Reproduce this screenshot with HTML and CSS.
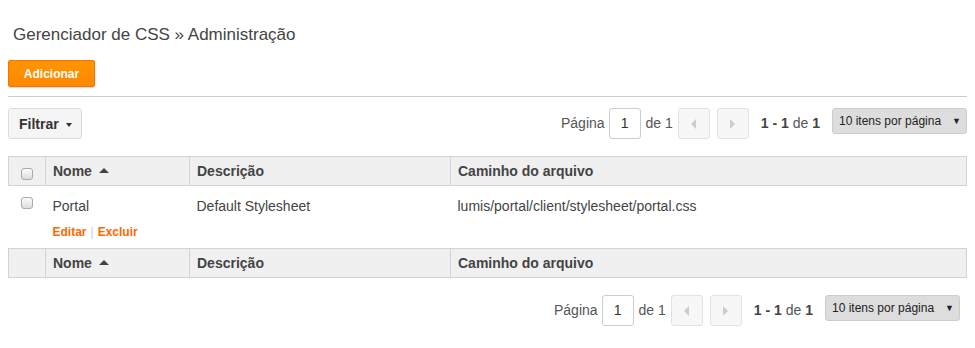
FILE: index.html
```html
<!DOCTYPE html>
<html lang="pt-BR">
<head>
  <meta charset="UTF-8" />
  <title>Gerenciador de CSS - Administração</title>
  <link rel="stylesheet" href="styles.css">
</head>
<body>

  <h1 class="title">Gerenciador de CSS &raquo; Administração</h1>

  <div class="toolbar">
    <button class="btn-add">Adicionar</button>
  </div>

  <!-- Filtro e paginação -->
  <div class="list-top">
    <button class="btn-filter">Filtrar <span class="caret"></span></button>
    <div class="pager">
      <span class="pager-label">Página</span>
      <span class="pager-input">1</span>
      <span class="pager-label">de 1</span>
      <span class="pager-btn"><span class="arrow-left"></span></span>
      <span class="pager-btn next"><span class="arrow-right"></span></span>
      <span class="pager-count"><b>1 - 1</b> de <b>1</b></span>
      <span class="pager-select">10 itens por página <span class="sel-arrow">&#9660;</span></span>
    </div>
  </div>

  <table class="grid">
    <thead>
      <tr>
        <th class="col-check"><span class="checkbox"></span></th>
        <th class="col-name">Nome <span class="sort-up"></span></th>
        <th class="col-desc">Descrição</th>
        <th>Caminho do arquivo</th>
      </tr>
    </thead>
    <tbody>
      <tr>
        <td class="col-check"><span class="checkbox"></span></td>
        <td>
          Portal
          <div class="actions"><a href="#">Editar</a><span class="sep">|</span><a href="#">Excluir</a></div>
        </td>
        <td>Default Stylesheet</td>
        <td>lumis/portal/client/stylesheet/portal.css</td>
      </tr>
    </tbody>
    <tfoot>
      <tr>
        <th class="col-check"></th>
        <th class="col-name">Nome <span class="sort-up"></span></th>
        <th class="col-desc">Descrição</th>
        <th>Caminho do arquivo</th>
      </tr>
    </tfoot>
  </table>

  <div class="list-bottom">
    <div class="pager">
      <span class="pager-label">Página</span>
      <span class="pager-input">1</span>
      <span class="pager-label">de 1</span>
      <span class="pager-btn"><span class="arrow-left"></span></span>
      <span class="pager-btn next"><span class="arrow-right"></span></span>
      <span class="pager-count"><b>1 - 1</b> de <b>1</b></span>
      <span class="pager-select">10 itens por página <span class="sel-arrow">&#9660;</span></span>
    </div>
  </div>

</body>
</html>
```

FILE: styles.css
```css
* { box-sizing: border-box; }
body {
  margin: 8px;
  font-family: 'Liberation Sans', Arial, sans-serif;
  color: #444;
  background: #fff;
}

.title {
  margin: 17px 0 0;
  padding-left: 5px;
  font-size: 17px;
  line-height: 20px;
  font-weight: normal;
  color: #444;
}

.toolbar {
  margin-top: 15px;
  padding-bottom: 9px;
  border-bottom: 1px solid #ccc;
}

.btn-add {
  display: block;
  height: 27px;
  width: 87px;
  padding: 0;
  border: 1px solid #ff7000;
  border-radius: 2px;
  background: linear-gradient(#ff9500, #ff8800);
  color: #fff;
  font-family: inherit;
  font-size: 12px;
  font-weight: bold;
  box-shadow: 0 1px 1px rgba(0,0,0,0.15);
}

.list-top {
  display: flex;
  justify-content: space-between;
  align-items: flex-start;
  margin-top: 11px;
}

.btn-filter {
  height: 31px;
  width: 74px;
  padding: 0 0 0 10px;
  text-align: left;
  border: 1px solid #ddd;
  border-radius: 3px;
  background: #f5f5f5;
  color: #333;
  font-family: inherit;
  font-size: 14px;
  font-weight: bold;
}

.caret {
  display: inline-block;
  margin-left: 3px;
  vertical-align: 2px;
  border-left: 3px solid transparent;
  border-right: 3px solid transparent;
  border-top: 4px solid #333;
}

.pager {
  display: flex;
  align-items: flex-start;
  font-size: 14px;
  color: #555;
}

.pager-label {
  line-height: 31px;
}

.pager-input {
  width: 32px;
  height: 31px;
  margin: 0 5px 0 4px;
  border: 1px solid #ccc;
  border-radius: 3px;
  text-align: center;
  line-height: 29px;
  color: #333;
}

.pager-btn {
  display: flex;
  align-items: center;
  justify-content: center;
  width: 32px;
  height: 31px;
  margin-left: 5px;
  border: 1px solid #e2e2e2;
  border-radius: 3px;
  background: #f7f7f7;
}

.pager-btn.next {
  margin-left: 7px;
}

.arrow-left {
  border-top: 5px solid transparent;
  border-bottom: 5px solid transparent;
  border-right: 5px solid #ccc;
}

.arrow-right {
  border-top: 5px solid transparent;
  border-bottom: 5px solid transparent;
  border-left: 5px solid #ccc;
}

.pager-count {
  margin-left: 12px;
  line-height: 31px;
  color: #555;
}

.pager-count b {
  color: #444;
}

.pager-select {
  display: flex;
  justify-content: space-between;
  align-items: center;
  width: 135px;
  height: 26px;
  margin-left: 12px;
  padding: 0 5px 0 6px;
  border: 1px solid #ccc;
  border-radius: 3px;
  background: #ddd;
  font-size: 12px;
  color: #222;
}

.sel-arrow {
  font-size: 9px;
}

/* Tabela */
.grid {
  width: 100%;
  margin-top: 17px;
  border-collapse: collapse;
  font-size: 14px;
}

.grid th {
  height: 29px;
  padding: 0 7px;
  border: 1px solid #d3d3d3;
  background: #f0f0f0;
  text-align: left;
  font-weight: bold;
  color: #444;
}

.grid td {
  padding: 11px 7px 8px;
  vertical-align: top;
  line-height: 18px;
  color: #444;
}

.grid .col-check {
  width: 37px;
  padding: 0 0 0 12px;
}

.grid td.col-check {
  padding-top: 11px;
}

.grid th.col-check .checkbox {
  margin-top: 6px;
}

.col-name { width: 144px; }
.col-desc { width: 261px; }

.checkbox {
  display: block;
  width: 12px;
  height: 12px;
  border: 1px solid #aaa;
  border-radius: 3px;
  background: linear-gradient(#fcfcfc, #dcdcdc);
}

.sort-up {
  display: inline-block;
  margin-left: 3px;
  vertical-align: 3px;
  border-left: 5px solid transparent;
  border-right: 5px solid transparent;
  border-bottom: 5px solid #444;
}

.actions {
  margin-top: 9px;
  font-size: 12px;
  line-height: 16px;
  font-weight: bold;
}

.actions a {
  color: #ff6600;
  text-decoration: none;
}

.actions .sep {
  margin: 0 4px;
  color: #ccc;
  font-weight: normal;
}

.list-bottom {
  display: flex;
  justify-content: flex-end;
  margin-top: 17px;
  padding-right: 7px;
}
```
